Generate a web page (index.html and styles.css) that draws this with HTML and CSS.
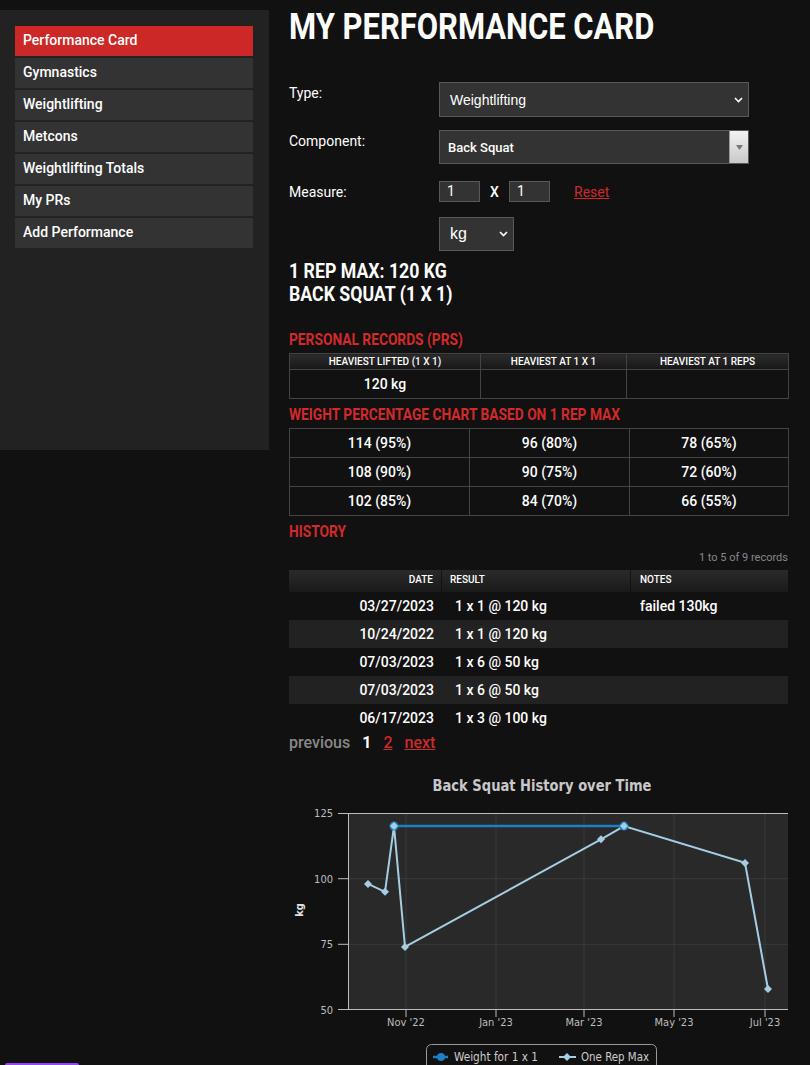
FILE: index.html
```html
<!DOCTYPE html>
<html>
<head>
<meta charset="utf-8">
<title>My Performance Card</title>
<link rel="stylesheet" href="styles.css">
</head>
<body>
<div class="page">
  <aside class="sidebar">
    <nav class="menu">
      <a class="menu-item active" href="#">Performance Card</a>
      <a class="menu-item" href="#">Gymnastics</a>
      <a class="menu-item" href="#">Weightlifting</a>
      <a class="menu-item" href="#">Metcons</a>
      <a class="menu-item" href="#">Weightlifting Totals</a>
      <a class="menu-item" href="#">My PRs</a>
      <a class="menu-item" href="#">Add Performance</a>
    </nav>
  </aside>

  <main class="main">
    <h1 class="title"><span class="cond">MY PERFORMANCE CARD</span></h1>

    <div class="form">
      <div class="row row-type">
        <div class="label">Type:</div>
        <div class="select sel-type">
          <span>Weightlifting</span>
          <svg class="chev" width="9" height="6" viewBox="0 0 9 6"><path d="M1 1 L4.5 4.5 L8 1" fill="none" stroke="#fff" stroke-width="1.6"/></svg>
        </div>
      </div>
      <div class="row row-comp">
        <div class="label">Component:</div>
        <div class="select sel-comp">
          <span>Back Squat</span>
          <div class="sel-btn"><svg width="7" height="5" viewBox="0 0 7 5"><path d="M0 0 L7 0 L3.5 5 Z" fill="#777"/></svg></div>
        </div>
      </div>
      <div class="row row-measure">
        <div class="label">Measure:</div>
        <div class="measure">
          <div class="input">1</div>
          <span class="times">X</span>
          <div class="input">1</div>
          <a class="reset" href="#">Reset</a>
        </div>
      </div>
      <div class="row row-unit">
        <div class="label"></div>
        <div class="select sel-unit">
          <span>kg</span>
          <svg class="chev" width="9" height="6" viewBox="0 0 9 6"><path d="M1 1 L4.5 4.5 L8 1" fill="none" stroke="#fff" stroke-width="1.6"/></svg>
        </div>
      </div>
    </div>

    <h2 class="max"><span class="cond">1 REP MAX: 120 KG</span><br><span class="cond">BACK SQUAT (1 X 1)</span></h2>

    <h3 class="section sec-pr"><span class="cond">PERSONAL RECORDS (PRS)</span></h3>
    <table class="grid pr">
      <colgroup><col class="c1"><col class="c2"><col class="c3"></colgroup>
      <thead>
        <tr><th>HEAVIEST LIFTED (1 X 1)</th><th>HEAVIEST AT 1 X 1</th><th>HEAVIEST AT 1 REPS</th></tr>
      </thead>
      <tbody>
        <tr><td>120 kg</td><td></td><td></td></tr>
      </tbody>
    </table>

    <h3 class="section sec-pct"><span class="cond">WEIGHT PERCENTAGE CHART BASED ON 1 REP MAX</span></h3>
    <table class="grid pct">
      <colgroup><col class="p1"><col class="p2"><col class="p3"></colgroup>
      <tbody>
        <tr><td>114 (95%)</td><td>96 (80%)</td><td>78 (65%)</td></tr>
        <tr><td>108 (90%)</td><td>90 (75%)</td><td>72 (60%)</td></tr>
        <tr><td>102 (85%)</td><td>84 (70%)</td><td>66 (55%)</td></tr>
      </tbody>
    </table>

    <h3 class="section sec-hist"><span class="cond">HISTORY</span></h3>
    <div class="records">1 to 5 of 9 records</div>
    <table class="hist">
      <colgroup><col class="h1"><col class="h2"><col class="h3"></colgroup>
      <thead>
        <tr><th class="date">DATE</th><th class="res">RESULT</th><th class="notes">NOTES</th></tr>
      </thead>
      <tbody>
        <tr><td class="date">03/27/2023</td><td class="res">1 x 1 @ 120 kg</td><td class="notes">failed 130kg</td></tr>
        <tr class="alt"><td class="date">10/24/2022</td><td class="res">1 x 1 @ 120 kg</td><td class="notes"></td></tr>
        <tr><td class="date">07/03/2023</td><td class="res">1 x 6 @ 50 kg</td><td class="notes"></td></tr>
        <tr class="alt"><td class="date">07/03/2023</td><td class="res">1 x 6 @ 50 kg</td><td class="notes"></td></tr>
        <tr><td class="date">06/17/2023</td><td class="res">1 x 3 @ 100 kg</td><td class="notes"></td></tr>
      </tbody>
    </table>

    <div class="pager">
      <span class="prev">previous</span>
      <span class="cur">1</span>
      <a class="plink" href="#">2</a>
      <a class="plink" href="#">next</a>
    </div>

    <svg class="chart" width="521" height="300" viewBox="0 0 521 300">
      <text class="c-title" x="253" y="26" text-anchor="middle" textLength="219" lengthAdjust="spacingAndGlyphs">Back Squat History over Time</text>
      <rect x="59" y="48" width="440" height="197" fill="#292929"/>
      <g stroke="#3a3a3a" stroke-width="1">
        <line x1="59" y1="113.7" x2="499" y2="113.7"/>
        <line x1="59" y1="179.3" x2="499" y2="179.3"/>
        <line x1="117" y1="48" x2="117" y2="245"/>
        <line x1="207" y1="48" x2="207" y2="245"/>
        <line x1="295" y1="48" x2="295" y2="245"/>
        <line x1="385" y1="48" x2="385" y2="245"/>
        <line x1="476" y1="48" x2="476" y2="245"/>
      </g>
      <g stroke="#bdbdbd" stroke-width="1">
        <line x1="49" y1="48.5" x2="499" y2="48.5"/>
        <line x1="59.5" y1="48" x2="59.5" y2="245"/>
        <line x1="49" y1="244.5" x2="499" y2="244.5"/>
        <line x1="49" y1="113.7" x2="59" y2="113.7"/>
        <line x1="49" y1="179.3" x2="59" y2="179.3"/>
        <line x1="117" y1="245" x2="117" y2="252"/>
        <line x1="207" y1="245" x2="207" y2="252"/>
        <line x1="295" y1="245" x2="295" y2="252"/>
        <line x1="385" y1="245" x2="385" y2="252"/>
        <line x1="476" y1="245" x2="476" y2="252"/>
      </g>
      <g class="c-axis" text-anchor="end">
        <text x="44" y="52">125</text>
        <text x="44" y="117.7">100</text>
        <text x="44" y="183.3">75</text>
        <text x="44" y="249">50</text>
      </g>
      <g class="c-axis" text-anchor="middle">
        <text x="117" y="261">Nov '22</text>
        <text x="207" y="261">Jan '23</text>
        <text x="295" y="261">Mar '23</text>
        <text x="385" y="261">May '23</text>
        <text x="476" y="261">Jul '23</text>
      </g>
      <text class="c-ylab" x="9.5" y="149" text-anchor="middle" transform="rotate(-90 9.5 145)">kg</text>

      <line x1="105" y1="61.1" x2="335" y2="61.1" stroke="#1b80c6" stroke-width="2.5"/>
      <polyline points="79,118.9 96,126.8 105,61.1 116,182 312,74.3 335,61.1 456,97.9 479,224" fill="none" stroke="#a6cee3" stroke-width="2"/>
      <circle cx="105" cy="61.1" r="4.5" fill="#1b80c6"/>
      <circle cx="335" cy="61.1" r="4.5" fill="#1b80c6"/>
      <g fill="#a6cee3">
        <polygon points="79,114.9 83,118.9 79,122.9 75,118.9"/>
        <polygon points="96,122.8 100,126.8 96,130.8 92,126.8"/>
        <polygon points="105,57.1 109,61.1 105,65.1 101,61.1"/>
        <polygon points="116,178 120,182 116,186 112,182"/>
        <polygon points="312,70.3 316,74.3 312,78.3 308,74.3"/>
        <polygon points="335,57.1 339,61.1 335,65.1 331,61.1"/>
        <polygon points="456,93.9 460,97.9 456,101.9 452,97.9"/>
        <polygon points="479,220 483,224 479,228 475,224"/>
      </g>

      <rect x="137.5" y="279.5" width="230" height="40" rx="5" fill="none" stroke="#9a9a9a"/>
      <line x1="144" y1="292" x2="159" y2="292" stroke="#1b80c6" stroke-width="2.5"/>
      <circle cx="152" cy="292" r="4" fill="#1b80c6"/>
      <text class="c-leg" x="165" y="296" textLength="84" lengthAdjust="spacingAndGlyphs">Weight for 1 x 1</text>
      <line x1="270" y1="292" x2="287" y2="292" stroke="#a6cee3" stroke-width="2"/>
      <polygon points="278,288 282,292 278,296 274,292" fill="#a6cee3"/>
      <text class="c-leg" x="292" y="296" textLength="68" lengthAdjust="spacingAndGlyphs">One Rep Max</text>
    </svg>
  </main>
</div>
<div class="launcher"></div>
</body>
</html>
```

FILE: styles.css
```css
* { box-sizing: border-box; }

html, body {
  margin: 0;
  padding: 0;
  background: #111111;
}

body {
  font-family: Roboto, "Liberation Sans", sans-serif;
  color: #ffffff;
}

.page {
  display: flex;
  align-items: flex-start;
}

/* Sidebar */
.sidebar {
  width: 269px;
  height: 440px;
  margin-top: 10px;
  background: #222222;
  padding: 16px 16px 0 15px;
}

.menu {
  display: flex;
  flex-direction: column;
  gap: 2px;
}

.menu-item {
  display: block;
  height: 30px;
  line-height: 29px;
  padding-left: 8px;
  background: #333333;
  color: #ffffff;
  font-size: 14px;
  font-weight: 500;
  text-decoration: none;
}

.menu-item.active {
  background: #cc2828;
}

/* Main */
.main {
  width: 499px;
  margin-left: 20px;
  padding-top: 5px;
}

/* condensed headline text (Roboto narrowed) */
.cond {
  display: inline-block;
  white-space: nowrap;
  transform-origin: 0 50%;
}

.title {
  margin: 0;
  font-family: Roboto, sans-serif;
  font-weight: 700;
  font-size: 36px;
  line-height: 44px;
  color: #ffffff;
}

.title .cond { transform: scaleX(0.86); }

.form {
  margin-top: 33px;
}

.row {
  display: flex;
  align-items: flex-start;
}

.row-comp { margin-top: 13px; }
.row-measure { margin-top: 17px; }
.row-unit { margin-top: 15px; }

.label {
  width: 150px;
  flex: none;
  padding-top: 1px;
  font-size: 14px;
  line-height: 20px;
  color: #ffffff;
}

.select {
  display: flex;
  align-items: center;
  background: #333333;
  border: 1px solid #585858;
  color: #ffffff;
}

.sel-type {
  width: 310px;
  height: 35px;
  padding: 0 5px 0 10px;
  justify-content: space-between;
  font-family: "Liberation Sans", Arial, sans-serif;
  font-size: 14px;
}

.sel-comp {
  width: 310px;
  height: 34px;
  padding-left: 8px;
  font-size: 13px;
  font-weight: 500;
}

.sel-btn {
  margin-left: auto;
  width: 19px;
  height: 100%;
  display: flex;
  align-items: center;
  justify-content: center;
  background: linear-gradient(#f2f2f2, #c9c9c9);
  border-left: 1px solid #9a9a9a;
}

.sel-unit {
  width: 75px;
  height: 34px;
  padding: 0 5px 0 10px;
  justify-content: space-between;
  font-family: "Liberation Sans", Arial, sans-serif;
  font-size: 16px;
}

.chev { display: block; }

.measure {
  display: flex;
  align-items: center;
}

.input {
  width: 41px;
  height: 21px;
  padding-left: 7px;
  background: #333333;
  border: 1px solid #585858;
  font-size: 14px;
  line-height: 19px;
  color: #ffffff;
}

.times {
  margin: 0 10px 0 10px;
  font-size: 14px;
  font-weight: 500;
  width: 9px;
}

.reset {
  margin-left: 24px;
  color: #c92a2a;
  font-size: 14px;
  text-decoration: underline;
}

.max {
  margin: 9px 0 0 0;
  font-family: Roboto, sans-serif;
  font-weight: 700;
  font-size: 20px;
  line-height: 23px;
  color: #ffffff;
}

.max .cond { transform: scaleX(0.886); }

.section {
  margin: 0 0 3px 0;
  font-family: Roboto, sans-serif;
  font-weight: 700;
  font-size: 16px;
  line-height: 20px;
  color: #d02a2a;
}

.section .cond { transform: scaleX(0.86); }

.sec-pr { margin-top: 24px; }
.sec-pct { margin-top: 6px; }
.sec-hist { margin-top: 6px; }

/* Bordered tables */
.grid {
  width: 499px;
  border-collapse: collapse;
  table-layout: fixed;
}

.grid th,
.grid td {
  border: 1px solid #444444;
  text-align: center;
  padding: 0;
}

.grid th {
  height: 16px;
  font-size: 10px;
  font-weight: 500;
  line-height: 12px;
  background: linear-gradient(#2c2c2c, #171717);
}

.grid td {
  height: 29px;
  font-size: 14px;
  font-weight: 500;
}

.pr .c1 { width: 191px; }
.pr .c2 { width: 146px; }
.pr .c3 { width: 162px; }

.pct td { height: 29px; }
.pct .p1 { width: 180px; }
.pct .p2 { width: 160px; }
.pct .p3 { width: 159px; }

.records {
  margin-top: 9px;
  text-align: right;
  font-size: 11px;
  line-height: 14px;
  color: #888888;
}

/* History table */
.hist {
  margin-top: 5px;
  width: 499px;
  border-collapse: separate;
  border-spacing: 0;
  table-layout: fixed;
}

.hist .h1 { width: 153px; }
.hist .h2 { width: 189px; }
.hist .h3 { width: 157px; }

.hist th {
  height: 22px;
  padding: 0 0 3px 0;
  font-size: 10px;
  font-weight: 500;
  line-height: 12px;
  text-align: left;
  background: linear-gradient(#2a2a2a, #1a1a1a);
  border-right: 1px solid #111111;
}

.hist th:last-child { border-right: none; }

.hist td {
  height: 28px;
  padding: 0;
  font-size: 14px;
  font-weight: 500;
  line-height: 16px;
}

.hist .date { text-align: right; padding-right: 8px; }
.hist th.res { padding-left: 8px; }
.hist td.res { padding-left: 13px; }
.hist .notes { padding-left: 9px; }

.hist tr.alt td { background: #222222; }

.pager {
  margin-top: 1px;
  display: flex;
  align-items: baseline;
  gap: 12px;
  font-size: 16px;
  font-weight: 500;
  line-height: 20px;
}

.prev { color: #888888; }
.cur { color: #ffffff; font-weight: 700; }
.plink { color: #c92a2a; text-decoration: underline; }

.chart {
  display: block;
  margin-top: 12px;
  overflow: visible;
}

.c-title {
  font-family: "DejaVu Sans Condensed", "DejaVu Sans", sans-serif;
  font-weight: 700;
  font-size: 15px;
  fill: #c8c8c8;
}

.c-axis text {
  font-family: "DejaVu Sans Condensed", "DejaVu Sans", sans-serif;
  font-size: 11px;
  fill: #bdbdbd;
}

.c-ylab {
  font-family: "DejaVu Sans Condensed", "DejaVu Sans", sans-serif;
  font-weight: 700;
  font-size: 11px;
  fill: #e0e0e0;
}

.c-leg {
  font-family: "DejaVu Sans Condensed", "DejaVu Sans", sans-serif;
  font-size: 12px;
  fill: #cccccc;
}

.launcher {
  position: fixed;
  left: 5px;
  bottom: 0;
  width: 74px;
  height: 2px;
  border-radius: 3px 3px 0 0;
  background: #9b44f2;
}
```
